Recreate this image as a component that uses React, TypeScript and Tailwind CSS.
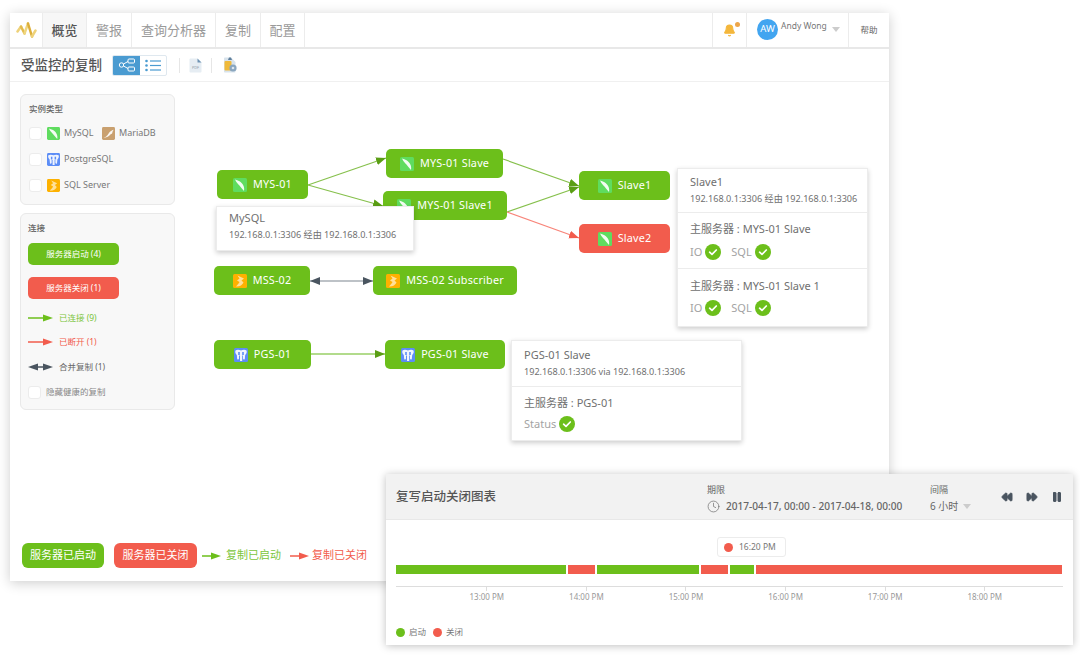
import { FC, ReactNode } from "react";
import { Bell, Clock, FastForward, Pause, Rewind } from "lucide-react";

type Db = "mysql" | "maria" | "pg" | "mss";

const DbIcon: FC<{ db: Db; size?: number }> = ({ db, size = 14 }) => {
  const bg = { mysql: "#5fdc5f", maria: "#c9a06f", pg: "#5c8df6", mss: "#fdb100" }[db];
  return (
    <svg width={size} height={size} viewBox="0 0 14 14" className="shrink-0">
      <rect width="14" height="14" rx="1.5" fill={bg} />
      {db === "mysql" && <path d="M2 1.5C3.5 5 6.5 7 8 9.5L11 13C12 9 9.5 5 6.5 3.3C5 2.5 3.5 1.9 2 1.5Z" fill="#fff" fillOpacity="0.92" />}
      {db === "maria" && <path d="M1.5 11.5C5 11 6 8.5 7.5 6.5C8.8 4.8 10.5 3.3 12.5 3L11.2 5.5C11.5 7.5 10 7.5 9 8C8 9 6 11.5 1.5 11.5Z" fill="#fff" fillOpacity="0.9" />}
      {db === "pg" && (
        <>
          <path d="M1.5 2.5C3 1.3 5.5 1.8 7 2.4C8.5 1.8 11 1.3 12.5 2.5C13.2 4 12.4 6 11.2 7L10.8 11C10.3 12 9.2 11.5 9 10.5V7.5H8.2V13H6V7.5H5V10.5C4.8 11.5 3.7 12 3.2 11L2.8 7C1.6 6 .8 4 1.5 2.5Z" fill="#fff" fillOpacity="0.9" />
          <rect x="4.2" y="4" width="1.6" height="3" fill={bg} />
          <rect x="8.2" y="4" width="1.6" height="3" fill={bg} />
        </>
      )}
      {db === "mss" && <path d="M4.5 1.5L11 4.5L8.5 6.5L10.5 8.5C9.5 11 6.5 12.8 3 12.5C4.5 10.5 6 9.5 6.5 8L4 6.5L6.5 4.5Z" fill="#fff" fillOpacity="0.6" />}
    </svg>
  );
};

const Logo: FC = () => (
  <svg width="21" height="18" viewBox="0 0 21 18" fill="none" strokeLinecap="round" strokeLinejoin="round" strokeWidth="2.5">
    <path d="M1.5 10.5L5 5.5" stroke="#eed27a" />
    <path d="M5 5.5L8.5 12.5" stroke="#e3bb4c" />
    <path d="M8.5 12.5L12 2.5" stroke="#efd67f" />
    <path d="M12 2.5L16 15.5" stroke="#dcae3a" />
    <path d="M16 15.5L19.5 9.5" stroke="#eed27a" />
  </svg>
);

const CheckBadge: FC = () => (
  <svg width="16" height="16" viewBox="0 0 16 16" className="shrink-0">
    <circle cx="8" cy="8" r="8" fill="#6cbf1b" />
    <path d="M4.6 8.2L7 10.4L11.3 6" fill="none" stroke="#fff" strokeWidth="1.7" strokeLinecap="round" strokeLinejoin="round" />
  </svg>
);

const Box: FC = () => <span className="h-[13px] w-[13px] shrink-0 rounded-[3px] border border-[#ececec] bg-white" />;

const LegendArrow: FC<{ color: string; both?: boolean; w?: number }> = ({ color, both, w = 25 }) => (
  <svg width={w} height="10" viewBox={`0 0 ${w} 10`} className="shrink-0">
    <line x1={both ? 6 : 0} y1="5" x2={w - 6} y2="5" stroke={color} strokeWidth="1.5" />
    <polygon points={`${w - 10},1.5 ${w},5 ${w - 10},8.5`} fill={color} />
    {both && <polygon points="10,1.5 0,5 10,8.5" fill={color} />}
  </svg>
);

const nodes: { label: string; db: Db; cls: string }[] = [
  { label: "MYS-01", db: "mysql", cls: "left-[42px] top-[76px] w-[91px] bg-[#6cbf1b]" },
  { label: "MYS-01 Slave", db: "mysql", cls: "left-[211px] top-[55px] w-[117px] bg-[#6cbf1b]" },
  { label: "MYS-01 Slave1", db: "mysql", cls: "left-[208px] top-[97px] w-[124px] bg-[#6cbf1b]" },
  { label: "Slave1", db: "mysql", cls: "left-[404px] top-[77px] w-[91px] bg-[#6cbf1b]" },
  { label: "Slave2", db: "mysql", cls: "left-[404px] top-[130px] w-[91px] bg-[#f25c4d]" },
  { label: "MSS-02", db: "mss", cls: "left-[39px] top-[172px] w-[96px] bg-[#6cbf1b]" },
  { label: "MSS-02 Subscriber", db: "mss", cls: "left-[198px] top-[172px] w-[144px] bg-[#6cbf1b]" },
  { label: "PGS-01", db: "pg", cls: "left-[39px] top-[246px] w-[97px] bg-[#6cbf1b]" },
  { label: "PGS-01 Slave", db: "pg", cls: "left-[210px] top-[246px] w-[120px] bg-[#6cbf1b]" },
];

const Edges: FC = () => (
  <svg width="704" height="320" viewBox="0 0 704 320" className="absolute left-0 top-0">
    <defs>
      <marker id="g" markerWidth="11" markerHeight="9" refX="10" refY="4" orient="auto" markerUnits="userSpaceOnUse">
        <polygon points="0,0 10,4 0,8" fill="#5a9e14" />
      </marker>
      <marker id="r" markerWidth="11" markerHeight="9" refX="10" refY="4" orient="auto" markerUnits="userSpaceOnUse">
        <polygon points="0,0 10,4 0,8" fill="#f25c4d" />
      </marker>
      <marker id="d" markerWidth="11" markerHeight="9" refX="10" refY="4" orient="auto-start-reverse" markerUnits="userSpaceOnUse">
        <polygon points="0,0 10,4 0,8" fill="#4a5560" />
      </marker>
    </defs>
    <g fill="none" strokeWidth="1.2">
      <line x1="133" y1="91" x2="211" y2="64" stroke="#86c04c" markerEnd="url(#g)" />
      <line x1="133" y1="91" x2="208" y2="112" stroke="#86c04c" markerEnd="url(#g)" />
      <line x1="328" y1="65" x2="404" y2="92" stroke="#86c04c" markerEnd="url(#g)" />
      <line x1="332" y1="118" x2="404" y2="93" stroke="#86c04c" markerEnd="url(#g)" />
      <line x1="332" y1="118" x2="404" y2="144" stroke="#f8857a" markerEnd="url(#r)" />
      <line x1="135" y1="187" x2="198" y2="187" stroke="#7c8690" markerStart="url(#d)" markerEnd="url(#d)" />
      <line x1="136" y1="260" x2="210" y2="260" stroke="#98cf66" strokeWidth="1.6" markerEnd="url(#g)" />
    </g>
  </svg>
);

const Status: FC<{ label: string }> = ({ label }) => (
  <span className="flex items-center gap-[3px]">
    <span className="text-[11px] text-[#a3a3a3]">{label}</span>
    <CheckBadge />
  </span>
);

const Card: FC<{ cls: string; children: ReactNode }> = ({ cls, children }) => (
  <div className={`absolute border border-[#ececec] bg-white shadow-[0_2px_5px_rgba(0,0,0,0.2)] ${cls}`}>{children}</div>
);

const CardHead: FC<{ title: string; sub: string; cls: string }> = ({ title, sub, cls }) => (
  <div className={`px-[12px] ${cls}`}>
    <div className="text-[11px] leading-[16px] text-[#707070]">{title}</div>
    <div className="mt-[2px] text-[9.1px] leading-[14px] whitespace-nowrap text-[#707070]">{sub}</div>
  </div>
);

const Master: FC<{ title: string; children: ReactNode; cls: string; rowCls: string }> = ({ title, children, cls, rowCls }) => (
  <div className={`border-t border-[#ececec] px-[12px] ${cls}`}>
    <div className="text-[11px] leading-[16px] text-[#707070]">{title}</div>
    <div className={`flex items-center gap-[10px] ${rowCls}`}>{children}</div>
  </div>
);

const ChartCard: FC = () => (
  <div className="absolute left-[386px] top-[474px] h-[171px] w-[687px] bg-white shadow-[0_1px_8px_rgba(0,0,0,0.25)]">
    <div className="flex h-[46px] border-b border-[#e8e8e8] bg-[#f2f2f2] pl-[10px] text-[#666]">
      <div className="flex w-[311px] items-center pt-[2px] text-[12.5px] font-medium text-[#555]">复写启动关闭图表</div>
      <div className="w-[223px] pt-[9px]">
        <div className="text-[9px] leading-[14px]">期限</div>
        <div className="mt-[2px] flex items-center gap-[6px] text-[10.1px] font-medium leading-[14px] whitespace-nowrap">
          <Clock size={13} strokeWidth={1.4} className="text-[#777]" />
          2017-04-17, 00:00 - 2017-04-18, 00:00
        </div>
      </div>
      <div className="w-[70px] pt-[9px]">
        <div className="text-[9px] leading-[14px]">间隔</div>
        <div className="mt-[2px] flex items-center gap-[5px] text-[10px] leading-[14px]">
          6 小时
          <span className="h-0 w-0 border-x-[4px] border-t-[5px] border-x-transparent border-t-[#ccc]" />
        </div>
      </div>
      <div className="flex items-center gap-[13px] pl-[1px] text-[#4a5560]">
        <Rewind size={12} fill="currentColor" />
        <FastForward size={12} fill="currentColor" />
        <Pause size={12} fill="currentColor" />
      </div>
    </div>
    <div className="px-[10px] pt-[17px]">
      <div className="ml-[321px] flex h-[20px] w-[69px] items-center gap-[6px] rounded-[3px] border border-[#ececec] pl-[6px] text-[8.5px] text-[#777]">
        <span className="h-[9px] w-[9px] rounded-full bg-[#f25c4d]" />
        16:20 PM
      </div>
      <div className="mt-[8px] flex h-[9px] gap-[2px]">
        <div className="w-[170px] bg-[#6cbf1b]" />
        <div className="w-[27px] bg-[#f25c4d]" />
        <div className="w-[102px] bg-[#6cbf1b]" />
        <div className="w-[27px] bg-[#f25c4d]" />
        <div className="w-[24px] bg-[#6cbf1b]" />
        <div className="w-[306px] bg-[#f25c4d]" />
      </div>
      <div className="mt-[12px] w-[667px] border-t border-[#ddd] pl-[41px]">
        <div className="flex">
          {["13:00 PM", "14:00 PM", "15:00 PM", "16:00 PM", "17:00 PM", "18:00 PM"].map((t) => (
            <div key={t} className="flex w-[99.6px] flex-col items-center">
              <span className="h-[4px] w-px bg-[#ddd]" />
              <span className="text-[8px] leading-[11px] text-[#999]">{t}</span>
            </div>
          ))}
        </div>
      </div>
      <div className="mt-[24px] flex items-center text-[8.5px] leading-[12px] text-[#777]">
        <span className="h-[9px] w-[9px] rounded-full bg-[#6cbf1b]" />
        <span className="ml-[4px] w-[24px]">启动</span>
        <span className="h-[9px] w-[9px] rounded-full bg-[#f25c4d]" />
        <span className="ml-[4px]">关闭</span>
      </div>
    </div>
  </div>
);

const App: FC = () => {
  return (
    <div className="relative h-[657px] w-[1080px] overflow-hidden bg-white pl-[10px] pt-[13px] font-['Noto_Sans','Noto_Sans_CJK_SC',sans-serif] text-[#777]">
      <div className="flex h-[568px] w-[879px] flex-col bg-white shadow-[0_2px_12px_rgba(0,0,0,0.2)]">
        <nav className="flex h-[36px] shrink-0 border-b-2 border-[#e8e8e8] text-[13px] text-[#9a9a9a]">
          <div className="flex w-[33px] items-center justify-center border-r border-[#ececec]">
            <Logo />
          </div>
          <div className="flex w-[44px] items-center justify-center border-r border-[#ececec] bg-[#f7f7f7] pt-[1px] font-medium text-[#555]">概览</div>
          <div className="flex w-[45px] items-center justify-center border-r border-[#ececec] pt-[1px]">警报</div>
          <div className="flex w-[84px] items-center justify-center border-r border-[#ececec] pt-[1px]">查询分析器</div>
          <div className="flex w-[45px] items-center justify-center border-r border-[#ececec] pt-[1px]">复制</div>
          <div className="flex w-[44px] items-center justify-center border-r border-[#ececec] pt-[1px]">配置</div>
          <div className="flex-1" />
          <div className="relative flex w-[35px] items-center justify-center border-x border-[#ececec]">
            <Bell size={13} fill="#f4b73c" stroke="#f4b73c" />
            <span className="absolute left-[22px] top-[9px] h-[5px] w-[5px] rounded-full bg-[#eda64a]" />
          </div>
          <div className="flex w-[102px] border-r border-[#ececec] pl-[10px] pt-[6px]">
            <span className="flex h-[21px] w-[21px] items-center justify-center rounded-full bg-[#42a5f0] text-[9.5px] text-white">AW</span>
            <span className="ml-[3px] text-[8.5px] leading-[14px] text-[#777]">Andy Wong</span>
            <span className="ml-[5px] mt-[8px] h-0 w-0 border-x-[4px] border-t-[5px] border-x-transparent border-t-[#ccc]" />
          </div>
          <div className="flex w-[40px] items-center justify-center text-[8.5px] text-[#666]">帮助</div>
        </nav>

        <div className="flex h-[33px] shrink-0 items-center border-b border-[#f0f0f0] pl-[11px]">
          <h1 className="w-[91px] text-[13.5px] font-medium text-[#555]">受监控的复制</h1>
          <div className="flex h-[21px] w-[55px] overflow-hidden rounded-[2px] border border-[#dfe8ef]">
            <div className="flex w-[27px] items-center justify-center bg-[#4a9bd1]">
              <svg width="18" height="14" viewBox="0 0 18 14" fill="none" stroke="#fff" strokeWidth="1">
                <circle cx="3.5" cy="7" r="2.2" />
                <rect x="10" y="1" width="6.5" height="4" rx="1" />
                <rect x="10" y="9" width="6.5" height="4" rx="1" />
                <path d="M5.5 6L10 3.5M5.5 8L10 10.5" />
              </svg>
            </div>
            <div className="flex flex-1 items-center justify-center">
              <svg width="17" height="13" viewBox="0 0 17 13" fill="#4a9bd1">
                <circle cx="1.5" cy="2" r="1.3" />
                <circle cx="1.5" cy="6.5" r="1.3" />
                <circle cx="1.5" cy="11" r="1.3" />
                <rect x="5" y="1.4" width="11" height="1.2" />
                <rect x="5" y="5.9" width="11" height="1.2" />
                <rect x="5" y="10.4" width="11" height="1.2" />
              </svg>
            </div>
          </div>
          <span className="ml-[12px] h-[15px] w-px bg-[#e6e6e6]" />
          <svg width="13" height="15" viewBox="0 0 13 15" className="ml-[9px]">
            <path d="M.5 1.5C.5 1 1 .5 1.5 .5H8.5L12.5 4.5V13.5C12.5 14 12 14.5 11.5 14.5H1.5C1 14.5 .5 14 .5 13.5Z" fill="#e6edf3" />
            <path d="M8.5 .5L12.5 4.5H8.5Z" fill="#6f93b3" />
            <text x="6.5" y="10.5" fontSize="3.8" textAnchor="middle" fill="#8a9aa8">PDF</text>
          </svg>
          <span className="ml-[9px] h-[15px] w-px bg-[#e6e6e6]" />
          <svg width="14" height="16" viewBox="0 0 14 16" className="ml-[11px]">
            <path d="M1 1.5C1 1 1.4 .5 2 .5H8L12.5 5V14.5C12.5 15 12 15.5 11.5 15.5H2C1.4 15.5 1 15 1 14.5Z" fill="#d8e3ec" />
            <path d="M6 .5H8L9 3H5Z" fill="#5f7f9c" />
            <rect x="1.5" y="4" width="7" height="9.5" rx="1" fill="#efb93a" />
            <circle cx="10" cy="11" r="3.6" fill="#8aa6bf" />
            <circle cx="10" cy="11" r="1.3" fill="#dde6ee" />
          </svg>
        </div>

        <div className="flex flex-1 px-[10px] pt-[12px]">
          <aside className="w-[155px] shrink-0 text-[9px]">
            <section className="h-[111px] rounded-[6px] border border-[#e9e9e9] bg-[#f8f8f8] pl-[8px] pt-[8px]">
              <h2 className="text-[8.5px] font-medium leading-[12px] text-[#666]">实例类型</h2>
              <div className="mt-[5px] flex h-[26px] items-center text-[9px]">
                <Box />
                <span className="ml-[5px]"><DbIcon db="mysql" size={13} /></span>
                <span className="ml-[4px] w-[38px]">MySQL</span>
                <DbIcon db="maria" size={13} />
                <span className="ml-[4px]">MariaDB</span>
              </div>
              <div className="flex h-[26px] items-center text-[9px]">
                <Box />
                <span className="ml-[5px]"><DbIcon db="pg" size={13} /></span>
                <span className="ml-[4px]">PostgreSQL</span>
              </div>
              <div className="flex h-[26px] items-center text-[9px]">
                <Box />
                <span className="ml-[5px]"><DbIcon db="mss" size={13} /></span>
                <span className="ml-[4px]">SQL Server</span>
              </div>
            </section>
            <section className="mt-[8px] h-[197px] rounded-[6px] border border-[#e9e9e9] bg-[#f8f8f8] pl-[7px] pt-[8px]">
              <h2 className="text-[8.5px] font-medium leading-[12px] text-[#666]">连接</h2>
              <div className="mt-[9px] flex h-[22px] w-[91px] items-center justify-center rounded-[5px] bg-[#6cbf1b] text-[8.5px] text-white">服务器启动 (4)</div>
              <div className="mt-[12px] flex h-[22px] w-[91px] items-center justify-center rounded-[5px] bg-[#f25c4d] text-[8.5px] text-white">服务器关闭 (1)</div>
              <div className="mt-[13px] flex h-[12px] items-center gap-[6px] text-[8.5px] text-[#7cc53c]">
                <LegendArrow color="#6cbf1b" />
                已连接 (9)
              </div>
              <div className="mt-[12px] flex h-[12px] items-center gap-[6px] text-[8.5px] text-[#f25c4d]">
                <LegendArrow color="#f25c4d" />
                已断开 (1)
              </div>
              <div className="mt-[13px] flex h-[12px] items-center gap-[6px] text-[8.5px] text-[#666]">
                <LegendArrow color="#4a5560" both />
                合并复制 (1)
              </div>
              <div className="mt-[12px] flex h-[14px] items-center gap-[5px] text-[8.5px] text-[#888]">
                <Box />
                隐藏健康的复制
              </div>
            </section>
          </aside>

          <main className="relative flex-1">
            <Edges />
            {nodes.map((n) => (
              <div
                key={n.label}
                className={`absolute flex h-[29px] items-center justify-center gap-[6px] rounded-[5px] text-[10.8px] tracking-[0.2px] whitespace-nowrap text-white ${n.cls}`}
              >
                <DbIcon db={n.db} />
                {n.label}
              </div>
            ))}
            <Card cls="left-[41px] top-[112px] h-[45px] w-[198px]">
              <CardHead title="MySQL" sub="192.168.0.1:3306 经由 192.168.0.1:3306" cls="pt-[3px]" />
            </Card>
            <Card cls="left-[502px] top-[74px] h-[159px] w-[191px]">
              <CardHead title="Slave1" sub="192.168.0.1:3306 经由 192.168.0.1:3306" cls="h-[43px] pt-[5px]" />
              <Master title="主服务器 : MYS-01 Slave" cls="h-[56px] pt-[8px]" rowCls="mt-[7px]">
                <Status label="IO" />
                <Status label="SQL" />
              </Master>
              <Master title="主服务器 : MYS-01 Slave 1" cls="pt-[9px]" rowCls="mt-[6px]">
                <Status label="IO" />
                <Status label="SQL" />
              </Master>
            </Card>
            <Card cls="left-[336px] top-[246px] h-[101px] w-[231px]">
              <CardHead title="PGS-01 Slave" sub="192.168.0.1:3306 via 192.168.0.1:3306" cls="h-[45px] pt-[6px]" />
              <Master title="主服务器 : PGS-01" cls="pt-[8px]" rowCls="mt-[5px]">
                <Status label="Status" />
              </Master>
            </Card>
          </main>
        </div>

        <footer className="flex h-[38px] shrink-0 items-start pl-[12px] text-[11px]">
          <div className="flex h-[25px] w-[82px] items-center justify-center rounded-[6px] bg-[#6cbf1b] text-white">服务器已启动</div>
          <div className="ml-[10px] flex h-[25px] w-[83px] items-center justify-center rounded-[6px] bg-[#f25c4d] text-white">服务器已关闭</div>
          <div className="ml-[5px] flex h-[25px] items-center gap-[5px] text-[#7cc53c]">
            <LegendArrow color="#6cbf1b" w={19} />
            复制已启动
          </div>
          <div className="ml-[9px] flex h-[25px] items-center gap-[3px] text-[#f25c4d]">
            <LegendArrow color="#f25c4d" w={19} />
            复制已关闭
          </div>
        </footer>
      </div>
      <ChartCard />
    </div>
  );
};

export default App;
